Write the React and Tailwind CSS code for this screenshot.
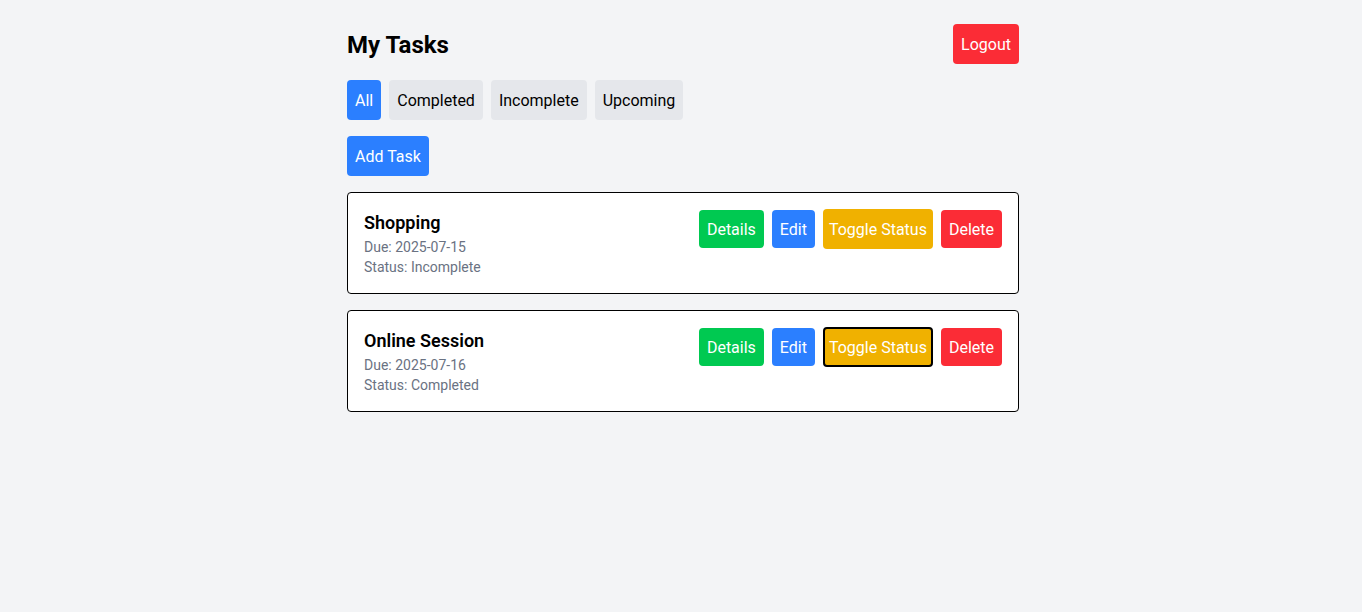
import React, { useState } from "react";

const tasks = [
  { id: 1, title: "Shopping", due: "2025-07-15", status: "Incomplete" },
  { id: 2, title: "Online Session", due: "2025-07-16", status: "Completed" },
];

const filters = ["All", "Completed", "Incomplete", "Upcoming"];

export default function App() {
  const [filter, setFilter] = useState("All");

  return (
    <div
      className="min-h-screen bg-gray-100 pl-1 pt-6 text-black"
      style={{ fontFamily: 'Roboto, "Noto Sans", sans-serif' }}
    >
      <div className="max-w-2xl mx-auto">
        <div className="flex items-center justify-between mb-4">
          <h1 className="text-2xl font-bold pt-0.5">My Tasks</h1>
          <button className="bg-red-500 text-white px-2 pt-[9px] pb-[7px] rounded">
            Logout
          </button>
        </div>

        <div className="flex gap-2 mb-4">
          {filters.map((f) => (
            <button
              key={f}
              onClick={() => setFilter(f)}
              className={`px-2 pt-[9px] pb-[7px] rounded ${
                filter === f ? "bg-blue-500 text-white" : "bg-gray-200 text-black"
              }`}
            >
              {f}
            </button>
          ))}
        </div>

        <button className="bg-blue-500 text-white px-2 pt-[9px] pb-[7px] rounded mb-4">
          Add Task
        </button>

        <div className="flex flex-col gap-4">
          {tasks.map((task, i) => (
            <div
              key={task.id}
              className="bg-white border border-black rounded p-4 flex justify-between items-start"
            >
              <div>
                <h2 className="text-lg font-semibold">{task.title}</h2>
                <p className="text-sm text-gray-500">Due: {task.due}</p>
                <p className="text-sm text-gray-500">Status: {task.status}</p>
              </div>
              <div className="flex items-center gap-2">
                <button className="bg-green-500 text-white px-2 pt-2 pb-1.5 rounded">
                  Details
                </button>
                <button className="bg-blue-500 text-white px-2 pt-2 pb-1.5 rounded">
                  Edit
                </button>
                <button
                  className={`bg-yellow-500 text-white px-1 pt-[7px] pb-[5px] rounded border-2 ${
                    i === 1 ? "border-black" : "border-transparent"
                  }`}
                >
                  Toggle Status
                </button>
                <button className="bg-red-500 text-white px-2 pt-2 pb-1.5 rounded">
                  Delete
                </button>
              </div>
            </div>
          ))}
        </div>
      </div>
    </div>
  );
}
